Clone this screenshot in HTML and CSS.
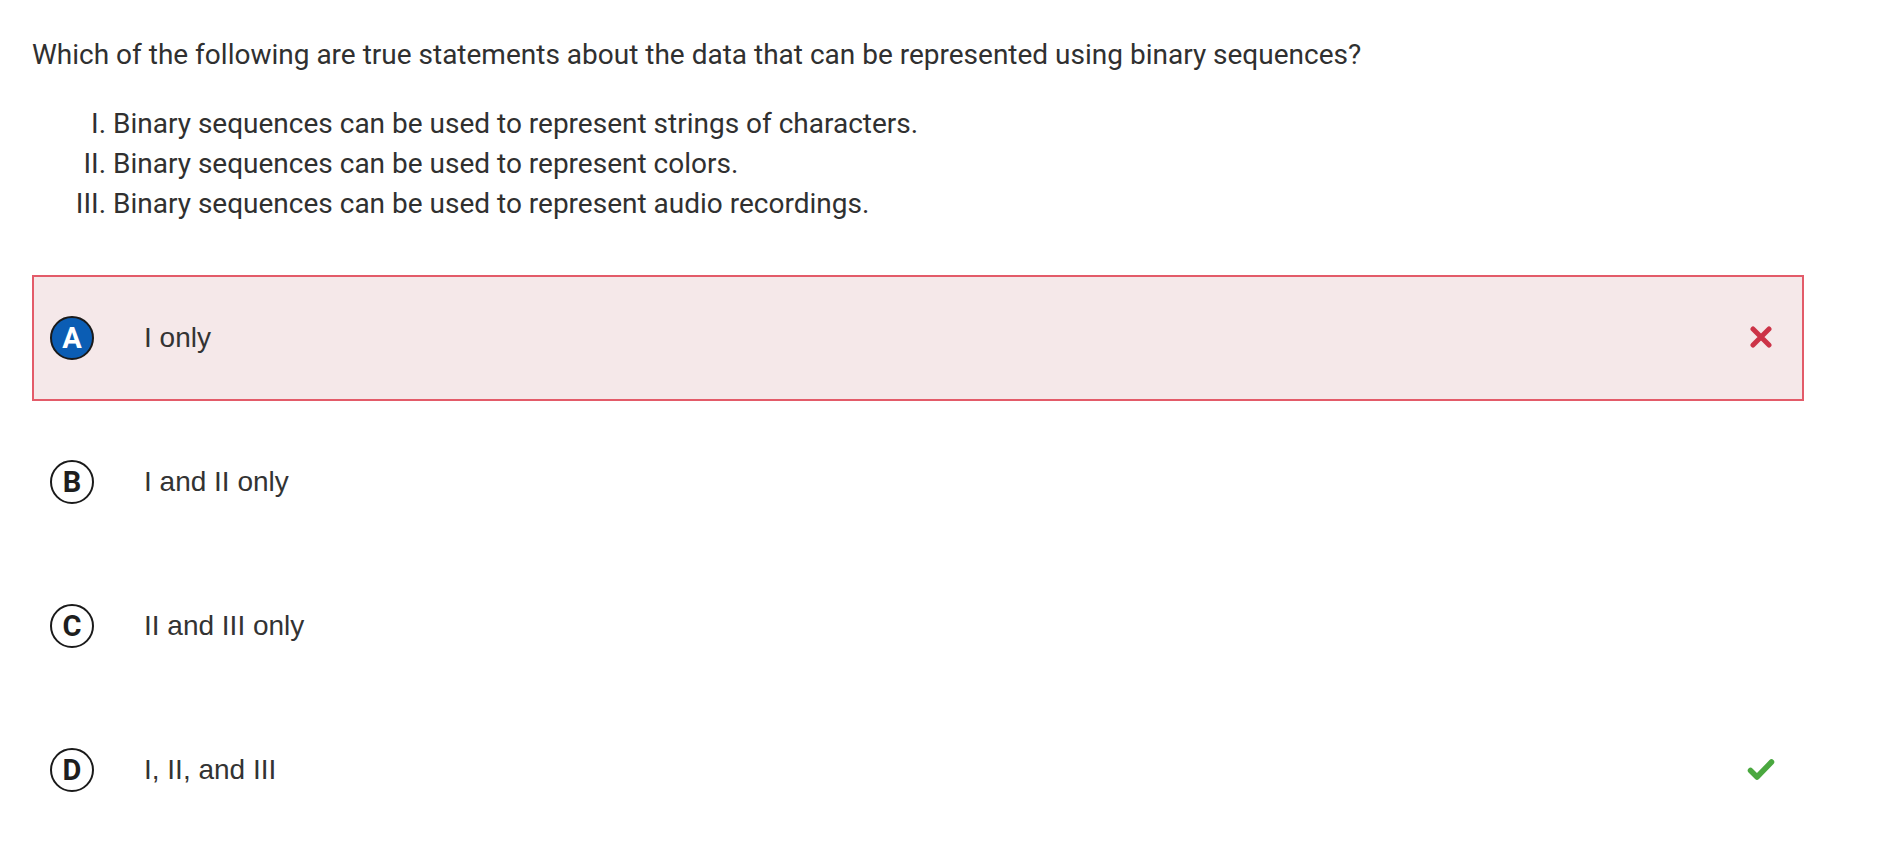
FILE: index.html
```html
<!DOCTYPE html>
<html lang="en">
<head>
<meta charset="utf-8">
<title>Question</title>
<link rel="stylesheet" href="styles.css">
</head>
<body>
<main class="question">
  <p class="stem">Which of the following are true statements about the data that can be represented using binary sequences?</p>
  <ol class="statements">
    <li>Binary sequences can be used to represent strings of characters.</li>
    <li>Binary sequences can be used to represent colors.</li>
    <li>Binary sequences can be used to represent audio recordings.</li>
  </ol>
  <div class="options">
    <div class="option option-wrong">
      <span class="letter letter-selected">A</span>
      <span class="option-text">I only</span>
      <svg class="mark" width="28" height="24" viewBox="0 0 28 24" aria-hidden="true">
        <path d="M6 3 L22 19 M22 3 L6 19" stroke="#cc3347" stroke-width="5" stroke-linecap="round" fill="none"/>
      </svg>
    </div>
    <div class="option">
      <span class="letter">B</span>
      <span class="option-text">I and II only</span>
    </div>
    <div class="option">
      <span class="letter">C</span>
      <span class="option-text">II and III only</span>
    </div>
    <div class="option">
      <span class="letter">D</span>
      <span class="option-text">I, II, and III</span>
      <svg class="mark" width="28" height="24" viewBox="0 0 28 24" aria-hidden="true">
        <path d="M3.5 12.5 L10 19 L24.5 4" stroke="#4aa83f" stroke-width="5.5" stroke-linecap="round" stroke-linejoin="round" fill="none"/>
      </svg>
    </div>
  </div>
</main>
</body>
</html>
```

FILE: styles.css
```css
html, body {
  margin: 0;
  padding: 0;
  background: #ffffff;
}

.question {
  width: 1772px;
  padding: 37px 0 0 32px;
  color: #333333;
}

.stem {
  margin: 0;
  font-family: Roboto, "Liberation Sans", sans-serif;
  font-size: 28px;
  line-height: 36px;
  color: #303030;
}

.statements {
  list-style: upper-roman;
  margin: 31px 0 0 0;
  padding-left: 81px;
  font-family: Roboto, "Liberation Sans", sans-serif;
  font-size: 28px;
  line-height: 40px;
  color: #303030;
}

.options {
  display: flex;
  flex-direction: column;
  gap: 18px;
  margin-top: 51px;
}

.option {
  display: flex;
  align-items: center;
  height: 126px;
  box-sizing: border-box;
  padding: 0 27px 0 16px;
  border: 2px solid transparent;
}

.option-wrong {
  background: #f5e8e9;
  border-color: #e35b69;
}

.letter {
  flex: none;
  display: flex;
  align-items: center;
  justify-content: center;
  width: 44px;
  height: 44px;
  box-sizing: border-box;
  border: 2px solid #1a1a1a;
  border-radius: 50%;
  background: #ffffff;
  color: #1e1e1e;
  font-family: Roboto, "Liberation Sans", Arial, sans-serif;
  font-weight: 700;
  font-size: 29px;
  line-height: 1;
}

.letter-selected {
  background: #0b5db4;
  color: #ffffff;
}

.option-text {
  flex: 1;
  margin-left: 50px;
  font-family: "Liberation Sans", Arial, sans-serif;
  font-size: 28px;
  color: #333333;
}

.mark {
  flex: none;
}
```
